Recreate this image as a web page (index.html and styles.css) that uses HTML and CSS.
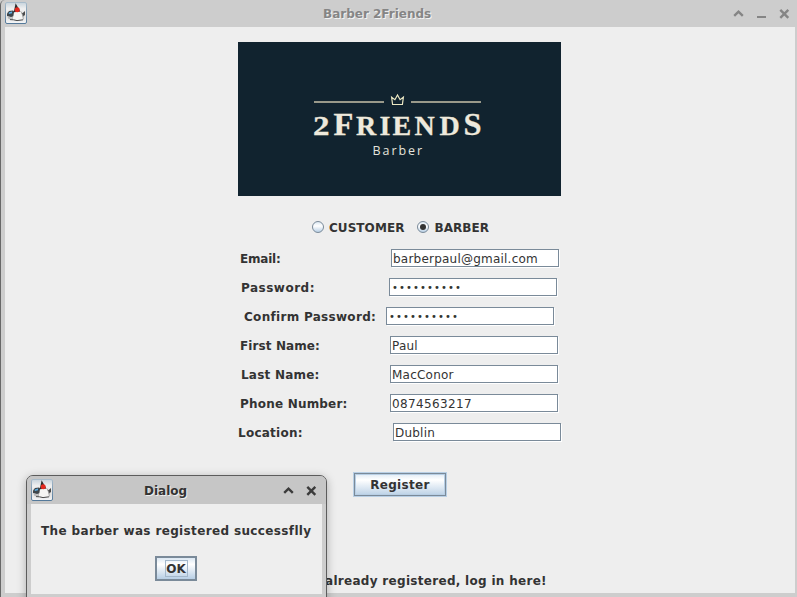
FILE: index.html
```html
<!DOCTYPE html>
<html lang="en">
<head>
<meta charset="utf-8">
<title>Barber 2Friends</title>
<link rel="stylesheet" href="styles.css">
</head>
<body>
<svg width="0" height="0" class="defs">
  <defs>
    <linearGradient id="tile" x1="0" y1="0" x2="0" y2="1"><stop offset="0" stop-color="#c7d3dc"/><stop offset=".3" stop-color="#f0f0f0"/><stop offset=".7" stop-color="#e3e3e3"/><stop offset="1" stop-color="#f4f6f8"/></linearGradient>
    <linearGradient id="rim" x1="0" y1="0" x2="0" y2="1"><stop offset="0" stop-color="#a9bccb"/><stop offset="1" stop-color="#54799a"/></linearGradient>
    <symbol id="duke" viewBox="0 0 22 22">
      <rect x=".5" y=".5" width="21" height="21" rx="1.5" fill="url(#tile)" stroke="url(#rim)"/>
      <path d="M2 11.5L4 9l4-.6 2 1.6v4l-4 1-4-1z" fill="#3f464b"/>
      <path d="M3.8 10.6l3.2-1v1.6l-3.2.8z" fill="#5eb2e8"/>
      <path d="M2.5 14.5l4 1 2-1v3.5l-5-1z" fill="#b9b9b9"/>
      <path d="M16 11.5l2-.8L20 9v4l-2.5 2z" fill="#4b4b4b"/>
      <path d="M10.6 1.3L16.2 11 8.6 11z" fill="#2e2e2e"/>
      <path d="M9 10.2l7-.7 1.6 4 .6 4.3-3.4-.3-3 .9-4-1z" fill="#f5f5f3"/>
      <path d="M16 9.5l1.8 4 .6 4" fill="none" stroke="#999" stroke-width=".8"/>
      <path d="M5 17.6l3.5 .2 3.5 .8 6-.8" fill="none" stroke="#4c4c4c" stroke-width="1"/>
      <circle cx="12.2" cy="7.8" r="2.5" fill="#e42a20"/>
    </symbol>
  </defs>
</svg>
<div class="window">
  <header class="titlebar">
    <svg class="app-icon"><use href="#duke"/></svg>
    <h1 class="title">Barber 2Friends</h1>
    <svg class="controls" width="58" height="12" viewBox="0 0 58 12" fill="none" stroke="#858585">
      <path d="M1.2 7.8L5.5 3.6 9.8 7.8" stroke-width="2.4"/>
      <path d="M24 9h9" stroke-width="2"/>
      <path d="M47.3 1.8l8 8M55.3 1.8l-8 8" stroke-width="2.4"/>
    </svg>
  </header>
  <main class="content">
    <svg class="logo" width="323" height="154" viewBox="0 0 323 154">
      <rect width="323" height="154" fill="#11232f"/>
      <path d="M76 60h70M173 60h70" stroke="#99998a" stroke-width="1.8"/>
      <path d="M153.6 55.2l3.3 2.5 2.6-4.7 2.6 4.7 3.3-2.5-1 7.3h-9.8z" fill="none" stroke="#ece8c4" stroke-width="1.2"/>
      <g class="brand">
        <text x="75" y="93" font-size="27" textLength="16.5" lengthAdjust="spacingAndGlyphs">2</text>
        <text x="95.5" y="93" font-size="32.5">F</text>
        <text x="118 141.5 154.5 176.5 201.5" y="93" font-size="28">RIEND</text>
        <text x="225.5" y="93" font-size="32.5">S</text>
      </g>
      <text class="brand-sub" x="134.5" y="113" textLength="50">Barber</text>
    </svg>
    <div class="roles">
      <span class="role"><i class="radio"></i><span>CUSTOMER</span></span>
      <span class="role"><i class="radio on"></i><span>BARBER</span></span>
    </div>
    <form class="form">
      <div class="row email"><label>Email:</label><div class="field">barberpaul@gmail.com</div></div>
      <div class="row password"><label>Password:</label><div class="field dots">••••••••••</div></div>
      <div class="row confirm"><label>Confirm Password:</label><div class="field dots">••••••••••</div></div>
      <div class="row first"><label>First Name:</label><div class="field">Paul</div></div>
      <div class="row last"><label>Last Name:</label><div class="field">MacConor</div></div>
      <div class="row phone"><label>Phone Number:</label><div class="field digits">0874563217</div></div>
      <div class="row location"><label>Location:</label><div class="field">Dublin</div></div>
    </form>
    <button class="register">Register</button>
    <p class="login">already registered, log in here!</p>
  </main>
</div>
<section class="dialog">
  <header class="dialog-bar">
    <svg class="app-icon"><use href="#duke"/></svg>
    <h2 class="title">Dialog</h2>
    <svg class="controls" width="35" height="12" viewBox="0 0 35 12" fill="none" stroke="#3b3b3b">
      <path d="M1.2 7.8L5.5 3.6 9.8 7.8" stroke-width="2.4"/>
      <path d="M24.3 1.8l8 8M32.3 1.8l-8 8" stroke-width="2.4"/>
    </svg>
  </header>
  <div class="dialog-body">
    <p class="message">The barber was registered successflly</p>
    <button class="ok"><span>OK</span></button>
  </div>
</section>
</body>
</html>
```

FILE: styles.css
```css
* { box-sizing: border-box; }
html, body { margin: 0; width: 797px; height: 597px; overflow: hidden; }
body { font: bold 12px/14px "DejaVu Sans", sans-serif; letter-spacing: .33px; color: #333; background: #cdcdcd; }
h1, h2, p { margin: 0; font-size: inherit; }
.defs { position: absolute; }

.window { height: 597px; border-left: 1px solid #686868; border-top-left-radius: 5px; padding: 0 2px 4px 4px; background: #cdcdcd; }
.titlebar { height: 27px; display: flex; align-items: flex-start; padding-top: 2px; }
.app-icon { width: 22px; height: 22px; flex: none; }
.title { letter-spacing: 0; }
.titlebar .title { margin: 5px 0 0 296px; width: 109px; white-space: nowrap; color: #858585; text-shadow: 1px 1px #f2f2f2; }
.titlebar .controls { margin: 6px 0 0 301px; flex: none; }

.content { height: 566px; background: #eee; padding-top: 15px; }
.logo { display: block; margin-left: 233px; }
.brand { font-family: "Liberation Serif", serif; font-weight: bold; fill: #eee9dc; stroke: #eee9dc; stroke-width: .3; letter-spacing: 0; }
.brand-sub { font: 500 12.5px "Open Sans", sans-serif; fill: #e5e4dc; }

.roles { display: flex; gap: 13px; margin: 24px 0 0 307px; height: 14px; }
.role { display: flex; align-items: center; gap: 5px; letter-spacing: .06px; }
.role span { padding-top: 2px; line-height: 14px; }
.radio { width: 12px; height: 12px; border: 1px solid #7a8a99; border-radius: 50%; background: linear-gradient(#dce8f3, #fff 40%, #b8cfe5); display: grid; place-items: center; }
.radio.on::after { content: ""; width: 6px; height: 6px; border-radius: 50%; background: #333; }

.form { margin-top: 15px; }
.row { display: flex; height: 29px; align-items: flex-start; }
.row label { padding-top: 3px; white-space: nowrap; flex: none; }
.field { width: 168px; height: 18px; border: 1px solid #7a8a99; background: #fff; box-shadow: 1px 1px #fff; padding: 2px 0 0 1px; font-weight: normal; letter-spacing: .22px; white-space: nowrap; }
.dots { font-size: 10px; padding-left: 2px; letter-spacing: 1.1px; }
.digits { letter-spacing: .365px; }
.email { padding-left: 235px; } .email label { width: 151px; letter-spacing: -.2px; }
.password { padding-left: 236px; } .password label { width: 148px; letter-spacing: .5px; }
.confirm { padding-left: 239px; } .confirm label { width: 142px; letter-spacing: .3px; }
.first { padding-left: 235px; } .first label { width: 150px; letter-spacing: .1px; }
.last { padding-left: 236px; } .last label { width: 149px; letter-spacing: .22px; }
.phone { padding-left: 235px; } .phone label { width: 150px; letter-spacing: .2px; }
.location { padding-left: 233px; } .location label { width: 155px; letter-spacing: .25px; }

button { font: inherit; letter-spacing: inherit; color: inherit; padding: 0; border-radius: 0; background: linear-gradient(#dce8f3, #fff 30%, #b8cfe5); }
.register { display: block; margin: 20px 0 0 348px; width: 94px; height: 25px; border: 1px solid #b8cfe5; box-shadow: inset 0 0 0 1px #7a8a99, inset 0 0 0 2px #b8cfe5; }
.login { margin: 77px 0 0 320px; letter-spacing: .3px; }

.dialog { position: absolute; left: 26px; top: 475px; width: 301px; height: 130px; border: 1px solid #5c5c5c; border-radius: 7px 7px 0 0; background: #cdcdcd; padding: 0 4px; box-shadow: 0 2px 10px rgba(0,0,0,.28); }
.dialog-bar { height: 28px; margin: 0 -4px; padding: 3px 0 0 4px; display: flex; background: #c6c6c6; border-radius: 6px 6px 0 0; }
.dialog-bar .title { margin: 5px 0 0 91px; width: 45px; text-shadow: 1px 1px #eee; }
.dialog-bar .controls { margin: 6px 0 0 94px; }
.dialog-body { height: 90px; background: #eee; padding-top: 20px; }
.message { margin-left: 10px; white-space: nowrap; letter-spacing: .36px; }
.ok { display: grid; place-items: center; margin: 18px 0 0 124px; width: 42px; height: 25px; border: 2px solid #7a8a99; }
.ok span { display: block; width: 23px; height: 17px; border: 1px solid #a3b8cc; line-height: 16px; letter-spacing: 0; }
```
